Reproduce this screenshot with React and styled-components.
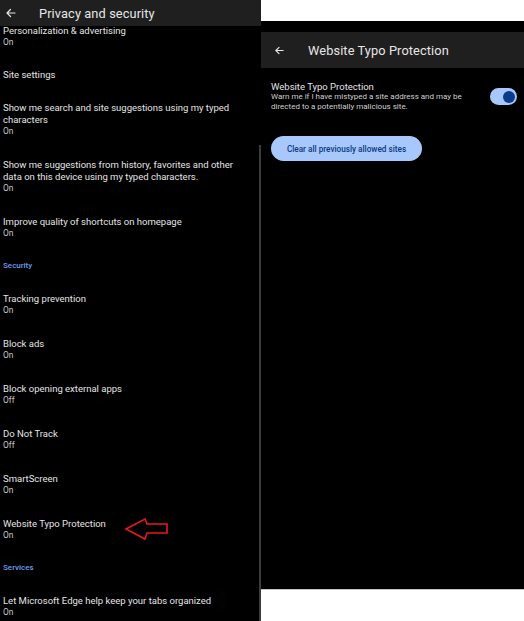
import React from "react";
import styled, { createGlobalStyle } from "styled-components";

const GlobalStyle = createGlobalStyle`
  html, body {
    margin: 0;
    padding: 0;
    background: #000;
  }
  body {
    font-family: Roboto, "Liberation Sans", sans-serif;
  }
`;

const Page = styled.div`
  display: grid;
  grid-template-columns: 261px 1fr;
  height: 621px;
  overflow: hidden;
`;

const LeftPanel = styled.div`
  position: relative;
  display: flex;
  flex-direction: column;
  background: #000;
  overflow: hidden;
`;

const Header = styled.div`
  display: flex;
  align-items: center;
  flex-shrink: 0;
  height: ${(p) => p.$height}px;
  padding-left: ${(p) => p.$pad}px;
  background: #1f1f1f;
  position: relative;
  z-index: 1;
`;

const HeaderTitle = styled.div`
  margin-left: ${(p) => p.$gap}px;
  font-size: 12.8px;
  color: #e6e6e6;
  letter-spacing: 0.1px;
`;

const List = styled.div`
  flex: 1;
  overflow: hidden;
`;

/* the list is scrolled a little, its first row sits partly under the header */
const ListInner = styled.div`
  margin-top: -12px;
`;

const Item = styled.div`
  position: relative;
  padding: ${(p) => (p.$single ? "10px 8px 10px 3px" : "11px 8px 11px 3px")};
`;

const ItemTitle = styled.div`
  font-size: 9.5px;
  line-height: 12px;
  color: #e4e4e4;
`;

const ItemSub = styled.div`
  font-size: 8.4px;
  line-height: 11px;
  color: #c8c8c8;
`;

const Section = styled.div`
  padding: 10px 3px;
  font-size: 8px;
  line-height: 12px;
  font-weight: 500;
  color: #6c9ef0;
`;

const Scrollbar = styled.div`
  position: absolute;
  right: 0;
  top: 145px;
  bottom: 0;
  width: 2px;
  background: #3c3c3c;
`;

const Marker = styled.svg`
  position: absolute;
  left: 123px;
  top: 10px;
`;

const RightPanel = styled.div`
  display: flex;
  flex-direction: column;
  background: #fff;
`;

const Screen = styled.div`
  margin-top: 21px;
  height: 569px;
  padding-top: 11px;
  box-sizing: border-box;
  display: flex;
  flex-direction: column;
  background: #000;
  border-bottom: 1px solid #c4c4c4;
`;

const Content = styled.div`
  padding: 13px 7px 0 10px;
`;

const SettingRow = styled.div`
  display: flex;
  align-items: center;
  justify-content: space-between;
`;

const SettingTitle = styled.div`
  font-size: 9.5px;
  line-height: 11px;
  color: #e4e4e4;
`;

const SettingDesc = styled.div`
  max-width: 210px;
  font-size: 8px;
  line-height: 10px;
  color: #cfcfcf;
`;

const Toggle = styled.div`
  display: flex;
  justify-content: ${(p) => (p.$on ? "flex-end" : "flex-start")};
  align-items: center;
  width: 27px;
  height: 17px;
  box-sizing: border-box;
  padding: 0 2.5px;
  border-radius: 9px;
  background: #a8c7fa;
`;

const Thumb = styled.div`
  width: 12px;
  height: 12px;
  border-radius: 50%;
  background: #0b3b8a;
`;

const PillButton = styled.button`
  display: flex;
  align-items: center;
  justify-content: center;
  margin-top: 24px;
  width: 151px;
  height: 25px;
  padding: 0;
  border: none;
  border-radius: 13px;
  background: #a8c7fa;
  color: #0b3a82;
  font-family: Roboto, "Liberation Sans", sans-serif;
  font-size: 8.2px;
  font-weight: 500;
`;

const BackArrow = ({ size }) => (
  <svg width={size} height={size} viewBox="0 0 24 24" fill="none">
    <path
      d="M20 12H5M11 5l-7 7 7 7"
      stroke="#e6e6e6"
      strokeWidth="2.4"
      strokeLinecap="round"
      strokeLinejoin="round"
    />
  </svg>
);

const settings = [
  { title: "Personalization & advertising", sub: "On" },
  { title: "Site settings", single: true },
  { title: "Show me search and site suggestions using my typed characters", sub: "On" },
  {
    title: "Show me suggestions from history, favorites and other data on this device using my typed characters.",
    sub: "On",
  },
  { title: "Improve quality of shortcuts on homepage", sub: "On" },
  { section: "Security" },
  { title: "Tracking prevention", sub: "On" },
  { title: "Block ads", sub: "On" },
  { title: "Block opening external apps", sub: "Off" },
  { title: "Do Not Track", sub: "Off" },
  { title: "SmartScreen", sub: "On" },
  { title: "Website Typo Protection", sub: "On", marked: true },
  { section: "Services" },
  { title: "Let Microsoft Edge help keep your tabs organized", sub: "On" },
];

const App = () => {
  return (
    <Page>
      <GlobalStyle />
      <LeftPanel>
        <Header $height={26} $pad={5}>
          <BackArrow size={12} />
          <HeaderTitle $gap={22}>Privacy and security</HeaderTitle>
        </Header>
        <List>
          <ListInner>
            {settings.map((s, i) =>
              s.section ? (
                <Section key={i}>{s.section}</Section>
              ) : (
                <Item key={i} $single={s.single}>
                  <ItemTitle>{s.title}</ItemTitle>
                  {s.sub && <ItemSub>{s.sub}</ItemSub>}
                  {s.marked && (
                    <Marker width="46" height="24" viewBox="0 0 46 24">
                      <path
                        d="M3 12 L22 2 L24 7 L44 7 L44 16 L24 16 L22 22 Z"
                        fill="none"
                        stroke="#e8191f"
                        strokeWidth="1.6"
                        strokeLinejoin="miter"
                      />
                    </Marker>
                  )}
                </Item>
              )
            )}
          </ListInner>
        </List>
        <Scrollbar />
      </LeftPanel>
      <RightPanel>
        <Screen>
          <Header $height={36} $pad={13}>
            <BackArrow size={11} />
            <HeaderTitle $gap={23}>Website Typo Protection</HeaderTitle>
          </Header>
          <Content>
            <SettingRow>
              <div>
                <SettingTitle>Website Typo Protection</SettingTitle>
                <SettingDesc>
                  Warn me if I have mistyped a site address and may be directed to a
                  potentially malicious site.
                </SettingDesc>
              </div>
              <Toggle $on>
                <Thumb />
              </Toggle>
            </SettingRow>
            <PillButton>Clear all previously allowed sites</PillButton>
          </Content>
        </Screen>
      </RightPanel>
    </Page>
  );
};

export default App;
